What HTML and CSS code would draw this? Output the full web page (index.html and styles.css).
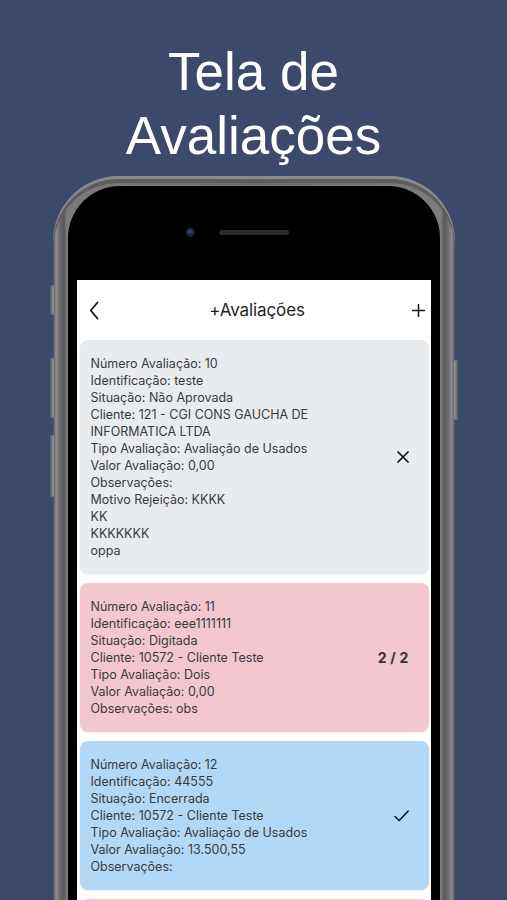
FILE: index.html
```html
<!DOCTYPE html>
<html lang="pt-BR">
<head>
<meta charset="utf-8">
<title>Tela de Avaliações</title>
<link rel="stylesheet" href="styles.css">
</head>
<body>
<div class="page">
  <h1 class="headline">Tela de<br>Avaliações</h1>
  <div class="phone">
    <span class="btn btn-mute"></span>
    <span class="btn btn-vol-up"></span>
    <span class="btn btn-vol-down"></span>
    <span class="btn btn-power"></span>
    <div class="bezel">
      <div class="bezel-top">
        <span class="camera"></span>
        <span class="speaker"></span>
        <span class="spacer"></span>
      </div>
      <div class="screen">
        <div class="navbar">
          <svg class="nav-icon back" width="10" height="19" viewBox="0 0 10 19"><path d="M8.5 1.5 L1.8 9.5 L8.5 17.5" fill="none" stroke="#1a1a1a" stroke-width="1.9" stroke-linecap="round" stroke-linejoin="round"/></svg>
          <div class="nav-title">+Avaliações</div>
          <svg class="nav-icon add" width="13" height="13" viewBox="0 0 13 13"><path d="M6.5 0.5 V12.5 M0.5 6.5 H12.5" fill="none" stroke="#1a1a1a" stroke-width="1.5" stroke-linecap="round"/></svg>
        </div>
        <div class="list">
          <div class="card card-gray">
            <div class="card-text">
              <div>Número Avaliação: 10</div>
              <div>Identificação: teste</div>
              <div>Situação: Não Aprovada</div>
              <div>Cliente: 121 - CGI CONS GAUCHA DE INFORMATICA LTDA</div>
              <div>Tipo Avaliação: Avaliação de Usados</div>
              <div>Valor Avaliação: 0,00</div>
              <div>Observações:</div>
              <div>Motivo Rejeição: KKKK</div>
              <div>KK</div>
              <div>KKKKKKK</div>
              <div>oppa</div>
            </div>
            <div class="card-status">
              <svg width="12" height="12" viewBox="0 0 12 12"><path d="M1 1 L11 11 M11 1 L1 11" fill="none" stroke="#111" stroke-width="1.7" stroke-linecap="round"/></svg>
            </div>
          </div>
          <div class="card card-pink">
            <div class="card-text">
              <div>Número Avaliação: 11</div>
              <div>Identificação: eee1111111</div>
              <div>Situação: Digitada</div>
              <div>Cliente: 10572 - Cliente Teste</div>
              <div>Tipo Avaliação: Dois</div>
              <div>Valor Avaliação: 0,00</div>
              <div>Observações: obs</div>
            </div>
            <div class="card-status">
              <span class="count">2 / 2</span>
            </div>
          </div>
          <div class="card card-blue">
            <div class="card-text">
              <div>Número Avaliação: 12</div>
              <div>Identificação: 44555</div>
              <div>Situação: Encerrada</div>
              <div>Cliente: 10572 - Cliente Teste</div>
              <div>Tipo Avaliação: Avaliação de Usados</div>
              <div>Valor Avaliação: 13.500,55</div>
              <div>Observações:</div>
            </div>
            <div class="card-status">
              <svg width="15" height="12" viewBox="0 0 15 12"><path d="M1 6.5 L5.2 10.5 L14 1.2" fill="none" stroke="#111" stroke-width="1.6" stroke-linecap="round" stroke-linejoin="round"/></svg>
            </div>
          </div>
          <div class="card card-pink card-partial"></div>
        </div>
      </div>
    </div>
  </div>
</div>
</body>
</html>
```
FILE: styles.css
```css
* { box-sizing: border-box; }

html, body {
  margin: 0;
  padding: 0;
}

body {
  width: 507px;
  height: 900px;
  overflow: hidden;
  background: #3b4a6b;
}

.page {
  display: flex;
  flex-direction: column;
  align-items: center;
}

.headline {
  margin: 0;
  padding-top: 40px;
  font-family: "Liberation Sans", Arial, sans-serif;
  font-weight: normal;
  font-size: 53px;
  line-height: 64px;
  color: #ffffff;
  text-align: center;
}

.phone {
  position: relative;
  flex-shrink: 0;
  margin-top: 8px;
  width: 402px;
  height: 760px;
  padding: 10px 15px 0 15px;
  border-radius: 66px 66px 0 0;
  background: linear-gradient(to right, #4d4d4f 0px, #8d8d90 3px, #6a6a6d 7px, #58585b 11px, #7c7c7f 14px, #6e6e71 50%, #7c7c7f calc(100% - 14px), #58585b calc(100% - 11px), #6a6a6d calc(100% - 7px), #8d8d90 calc(100% - 3px), #4d4d4f 100%);
  box-shadow: inset 0 3px 0 #8a8a8d, inset 0 7px 0 #5d5d60;
}

.btn {
  position: absolute;
  width: 4px;
  background: linear-gradient(to right, #5a5a5d, #9a9a9d);
  border-radius: 2px;
}
.btn-mute { left: -3px; top: 109px; height: 30px; }
.btn-vol-up { left: -3px; top: 182px; height: 60px; }
.btn-vol-down { left: -3px; top: 259px; height: 62px; }
.btn-power { right: -3px; top: 184px; height: 60px; background: linear-gradient(to right, #9a9a9d, #5a5a5d); }

.bezel {
  height: 100%;
  background: #000;
  border-radius: 52px 52px 0 0;
  padding: 0 9px;
  display: flex;
  flex-direction: column;
  overflow: hidden;
}

.bezel-top {
  flex: 0 0 94px;
  height: 94px;
  display: flex;
  align-items: center;
  justify-content: center;
  padding-bottom: 2px;
}

.camera {
  width: 9px;
  height: 9px;
  border-radius: 50%;
  background: radial-gradient(circle at 45% 40%, #3a4c7a 0, #1b2340 50%, #111 100%);
  margin-right: 24px;
}

.speaker {
  width: 70px;
  height: 5px;
  border-radius: 3px;
  background: #2b2b2d;
}

.spacer {
  width: 33px;
}

.screen {
  flex: 1 1 auto;
  min-height: 0;
  overflow: hidden;
  background: #ffffff;
  font-family: Inter, "Noto Sans", sans-serif;
}

.navbar {
  height: 60px;
  display: flex;
  align-items: center;
  justify-content: space-between;
  padding: 0 6px 0 12px;
}

.nav-title {
  font-size: 17px;
  color: #1f1f1f;
  letter-spacing: -0.1px;
  padding-left: 4px;
}

.list {
  display: flex;
  flex-direction: column;
  gap: 9px;
  padding: 0 2px 0 3px;
}

.card {
  display: flex;
  align-items: center;
  border-radius: 8px;
  padding: 15px 20px 15px 11px;
  box-shadow: 0 1px 2px rgba(0, 0, 0, 0.08);
}

.card-partial {
  height: 60px;
}

.card-gray { background: #e9ecef; }
.card-pink { background: #f2c7d0; }
.card-blue { background: #b3d8f5; }

.card-text {
  flex: 1;
  font-size: 12.5px;
  line-height: 17px;
  color: #3a3a3c;
  padding-right: 40px;
}

.card-status {
  width: 40px;
  display: flex;
  justify-content: flex-end;
  align-items: center;
}

.count {
  font-size: 14px;
  font-weight: 700;
  color: #333;
  letter-spacing: 0.2px;
}
```
